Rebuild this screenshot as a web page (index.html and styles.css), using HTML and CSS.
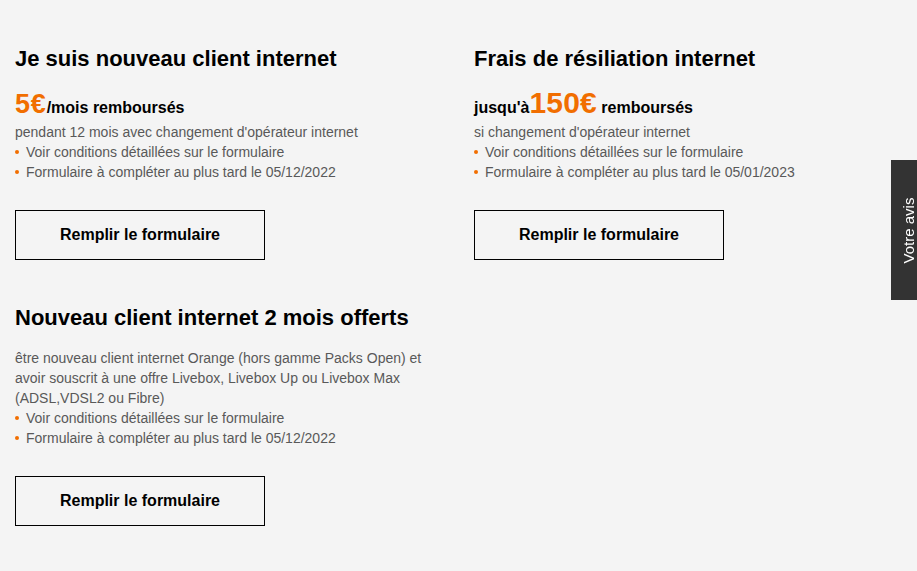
FILE: index.html
```html
<!DOCTYPE html>
<html lang="fr">
<head>
<meta charset="utf-8">
<title>Offres internet</title>
<link rel="stylesheet" href="styles.css">
</head>
<body>
<main class="offers">
  <section class="offer">
    <h2 class="offer-title">Je suis nouveau client internet</h2>
    <p class="price price-small"><span class="amount">5€</span><span>/mois remboursés</span></p>
    <p class="desc">pendant 12 mois avec changement d'opérateur internet</p>
    <ul class="bullets">
      <li>Voir conditions détaillées sur le formulaire</li>
      <li>Formulaire à compléter au plus tard le 05/12/2022</li>
    </ul>
    <a class="btn" href="#">Remplir le formulaire</a>
  </section>
  <section class="offer">
    <h2 class="offer-title">Frais de résiliation internet</h2>
    <p class="price price-large"><span>jusqu'à</span><span class="amount">150€</span><span>&nbsp;remboursés</span></p>
    <p class="desc">si changement d'opérateur internet</p>
    <ul class="bullets">
      <li>Voir conditions détaillées sur le formulaire</li>
      <li>Formulaire à compléter au plus tard le 05/01/2023</li>
    </ul>
    <a class="btn" href="#">Remplir le formulaire</a>
  </section>
  <section class="offer offer-second">
    <h2 class="offer-title">Nouveau client internet 2 mois offerts</h2>
    <p class="desc desc-wide">être nouveau client internet Orange (hors gamme Packs Open) et avoir souscrit à une offre Livebox, Livebox Up ou Livebox Max (ADSL,VDSL2 ou Fibre)</p>
    <ul class="bullets">
      <li>Voir conditions détaillées sur le formulaire</li>
      <li>Formulaire à compléter au plus tard le 05/12/2022</li>
    </ul>
    <a class="btn" href="#">Remplir le formulaire</a>
  </section>
</main>
<a class="feedback" href="#"><span>Votre avis</span></a>
</body>
</html>
```
FILE: styles.css
```css
html, body {
  margin: 0;
  padding: 0;
  background: #f4f4f4;
}
body {
  font-family: "Liberation Sans", Arial, Helvetica, sans-serif;
  color: #000;
  width: 917px;
  height: 571px;
  overflow: hidden;
}
.offers {
  display: grid;
  grid-template-columns: 459px 420px;
  row-gap: 45px;
  padding: 46px 0 0 15px;
}
.offer {
  display: flex;
  flex-direction: column;
  align-items: flex-start;
}
.offer-title {
  margin: 0;
  font-size: 22px;
  line-height: 26px;
  font-weight: 700;
}
.price {
  display: flex;
  align-items: baseline;
  margin: 0 0 4px;
  font-size: 16px;
  line-height: 1;
  font-weight: 700;
}
.price-small {
  margin-top: 19px;
}
.price-large {
  margin-top: 16px;
}
.amount {
  color: #f16e00;
  line-height: 1;
}
.price-small .amount {
  font-size: 27px;
  letter-spacing: 0.8px;
}
.price-large .amount {
  font-size: 30px;
  letter-spacing: 0.2px;
}
.desc {
  margin: 0;
  font-size: 14px;
  line-height: 20px;
  color: #595959;
}
.desc-wide {
  margin-top: 17px;
  width: 425px;
}
.bullets {
  list-style: none;
  margin: 0;
  padding: 0;
  font-size: 14px;
  line-height: 20px;
  color: #595959;
}
.bullets li {
  display: flex;
  align-items: center;
  gap: 7px;
}
.bullets li::before {
  content: "";
  width: 4px;
  height: 4px;
  border-radius: 50%;
  background: #f16e00;
  flex: none;
}
.btn {
  margin-top: 28px;
  box-sizing: border-box;
  width: 250px;
  height: 50px;
  border: 1px solid #000;
  display: flex;
  align-items: center;
  justify-content: center;
  font-size: 16px;
  font-weight: 700;
  color: #000;
  text-decoration: none;
}
.feedback {
  position: fixed;
  right: 0;
  top: 160px;
  width: 26px;
  height: 140px;
  box-sizing: border-box;
  padding-left: 9px;
  background: #333;
  display: flex;
  align-items: center;
  justify-content: center;
  text-decoration: none;
}
.feedback span {
  color: #fff;
  font-size: 15px;
  white-space: nowrap;
  transform: rotate(-90deg);
  display: block;
}
```
